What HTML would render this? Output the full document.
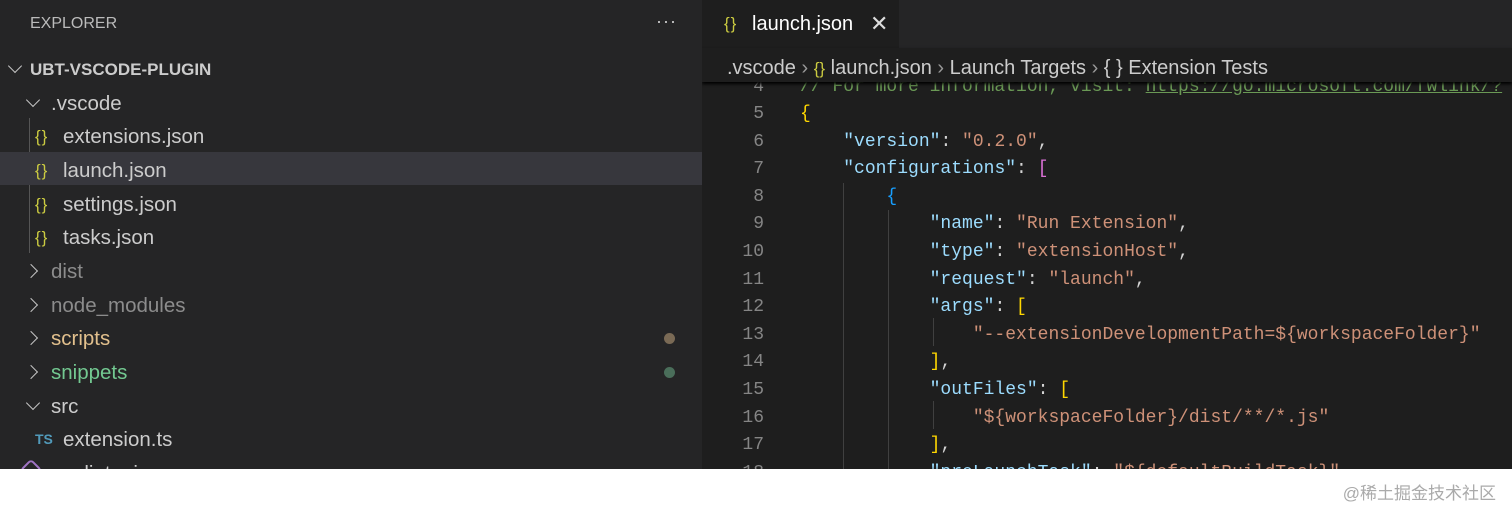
<!DOCTYPE html>
<html><head><meta charset="utf-8"><style>
*{margin:0;padding:0;box-sizing:border-box}
body{width:1512px;height:514px;background:#fff;position:relative;overflow:hidden;font-family:"Liberation Sans",sans-serif}
#side{position:absolute;left:0;top:0;width:702px;height:469px;background:#252526;overflow:hidden;color:#ccc}
#ed{position:absolute;left:702px;top:0;width:810px;height:469px;background:#1e1e1e;overflow:hidden}
.row{position:absolute;left:0;width:702px;height:33px;font-size:20.5px;line-height:37px;white-space:nowrap}
.chev{position:absolute;width:10px;height:10px;border-right:1.6px solid #c5c5c5;border-bottom:1.6px solid #c5c5c5}
.br{color:#cbcb41;font-size:17px;position:absolute;letter-spacing:1px}
.dot{position:absolute;right:27px;top:13px;width:11px;height:11px;border-radius:50%}
.ln{position:absolute;left:0;width:62px;text-align:right;color:#858585}
.code{font-family:"Liberation Mono",monospace;font-size:18px}
.cl{position:absolute;left:98px;white-space:pre;color:#d4d4d4}
.k{color:#9cdcfe}.s{color:#ce9178}.y{color:#ffd700}.p{color:#da70d6}.b{color:#179fff}
.guide{position:absolute;width:1px;background:#404040}
</style></head><body>
<div id="side">
 <div style="position:absolute;left:30px;top:15px;font-size:16px;color:#bbb">EXPLORER</div>
 <div style="position:absolute;left:656px;top:11px;font-size:18px;color:#ccc;letter-spacing:1px">···</div>
 <div class="row" style="top:51px"><span class="chev" style="left:10px;top:10px;transform:rotate(45deg)"></span><span style="position:absolute;left:30px;font-weight:bold;font-size:17px">UBT-VSCODE-PLUGIN</span></div>
 <div class="row" style="top:85px"><span class="chev" style="left:28px;top:10px;transform:rotate(45deg)"></span><span style="position:absolute;left:51px">.vscode</span></div>
 <div style="position:absolute;left:29px;top:118px;width:1px;height:135px;background:#555"></div>
 <div class="row" style="top:152px;background:#37373d"></div>
 <div class="row" style="top:118px"><span class="br" style="left:35px">{}</span><span style="position:absolute;left:63px">extensions.json</span></div>
 <div class="row" style="top:152px"><span class="br" style="left:35px">{}</span><span style="position:absolute;left:63px">launch.json</span></div>
 <div class="row" style="top:186px"><span class="br" style="left:35px">{}</span><span style="position:absolute;left:63px">settings.json</span></div>
 <div class="row" style="top:219px"><span class="br" style="left:35px">{}</span><span style="position:absolute;left:63px">tasks.json</span></div>
 <div class="row" style="top:253px"><span class="chev" style="left:26px;top:13px;transform:rotate(-45deg)"></span><span style="position:absolute;left:51px;color:#8c8c8c">dist</span></div>
 <div class="row" style="top:287px"><span class="chev" style="left:26px;top:13px;transform:rotate(-45deg)"></span><span style="position:absolute;left:51px;color:#8c8c8c">node_modules</span></div>
 <div class="row" style="top:320px"><span class="chev" style="left:26px;top:13px;transform:rotate(-45deg)"></span><span style="position:absolute;left:51px;color:#e2c08d">scripts</span><span class="dot" style="background:#7a6a55"></span></div>
 <div class="row" style="top:354px"><span class="chev" style="left:26px;top:13px;transform:rotate(-45deg)"></span><span style="position:absolute;left:51px;color:#73c991">snippets</span><span class="dot" style="background:#4a6e5a"></span></div>
 <div class="row" style="top:388px"><span class="chev" style="left:28px;top:10px;transform:rotate(45deg)"></span><span style="position:absolute;left:51px">src</span></div>
 <div class="row" style="top:421px"><span style="position:absolute;left:35px;color:#519aba;font-size:14px;font-weight:bold">TS</span><span style="position:absolute;left:63px">extension.ts</span></div>
 <div class="row" style="top:455px"><span style="position:absolute;left:23px;top:7px;width:16px;height:16px;border:2px solid #a074c4;border-radius:4px;transform:rotate(45deg)"></span><span style="position:absolute;left:57px">.eslintrc.json</span></div>
</div>
<div id="ed">
 <div style="position:absolute;left:0;top:0;width:810px;height:48px;background:#252526"></div>
 <div style="position:absolute;left:0;top:0;width:197px;height:48px;background:#1e1e1e"></div>
 <span class="br" style="left:22px;top:14px">{}</span>
 <div style="position:absolute;left:50px;top:13px;font-size:20px;color:#fff">launch.json</div>
 <div style="position:absolute;left:168px;top:11px;font-size:22px;color:#ddd">✕</div>
 <div style="position:absolute;left:0;top:48px;width:810px;height:34px;background:#1e1e1e;box-shadow:0 2px 3px #000;z-index:2"></div>
 <div style="position:absolute;left:25px;top:57px;font-size:20px;color:#ccc;white-space:nowrap;z-index:3">.vscode <span style="color:#999">›</span> <span style="color:#cbcb41;font-size:17px">{}</span> launch.json <span style="color:#999">›</span> Launch Targets <span style="color:#999">›</span> { } Extension Tests</div>
 <div class="code">
  <div style="position:absolute;left:0;top:74px;width:810px;height:27px;line-height:27px;z-index:1">
   <span class="ln">4</span><span class="cl" style="color:#6a9955">// For more information, visit: <u>https://go.microsoft.com/fwlink/?</u></span></div>
  <div class="guide" style="left:141px;top:183px;height:290px"></div>
  <div class="guide" style="left:186px;top:210px;height:263px"></div>
  <div class="guide" style="left:231px;top:318px;height:28px"></div>
  <div class="guide" style="left:231px;top:401px;height:28px"></div>
 </div>
 <div class="code" id="lines"></div>
</div>
<div style="position:absolute;right:16px;top:479px;font-size:17px;color:#aaa;font-family:'Liberation Sans','Noto Sans CJK SC',sans-serif">@稀土掘金技术社区</div>
<script>
const L=[
[5,'<span class="y">{</span>'],
[6,'    <span class="k">"version"</span>: <span class="s">"0.2.0"</span>,'],
[7,'    <span class="k">"configurations"</span>: <span class="p">[</span>'],
[8,'        <span class="b">{</span>'],
[9,'            <span class="k">"name"</span>: <span class="s">"Run Extension"</span>,'],
[10,'            <span class="k">"type"</span>: <span class="s">"extensionHost"</span>,'],
[11,'            <span class="k">"request"</span>: <span class="s">"launch"</span>,'],
[12,'            <span class="k">"args"</span>: <span class="y">[</span>'],
[13,'                <span class="s">"--extensionDevelopmentPath=${workspaceFolder}"</span>'],
[14,'            <span class="y">]</span>,'],
[15,'            <span class="k">"outFiles"</span>: <span class="y">[</span>'],
[16,'                <span class="s">"${workspaceFolder}/dist/**/*.js"</span>'],
[17,'            <span class="y">]</span>,'],
[18,'            <span class="k">"preLaunchTask"</span>: <span class="s">"${defaultBuildTask}"</span>']];
let h='';L.forEach((l,i)=>{const t=101+i*27.6;h+=`<div style="position:absolute;left:0;top:${t}px;width:810px;height:27px;line-height:27px"><span class="ln">${l[0]}</span><span class="cl">${l[1]}</span></div>`});
document.getElementById('lines').innerHTML=h;
</script>
</body></html>
